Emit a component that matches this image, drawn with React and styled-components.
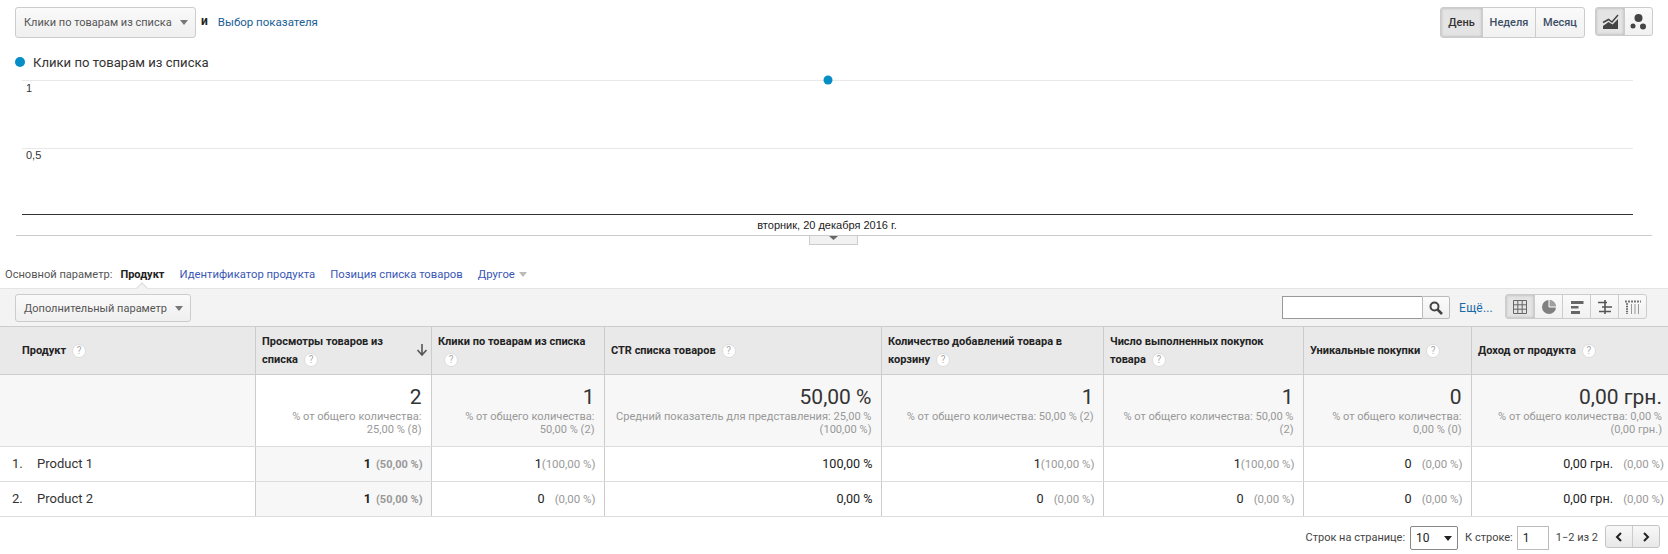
import React from "react";
import styled, { createGlobalStyle } from "styled-components";

const Global = createGlobalStyle`
  html, body { margin: 0; padding: 0; background: #fff; }
  body { font-family: Roboto, "Liberation Sans", Arial, sans-serif; color: #333; overflow: hidden; }
  * { box-sizing: border-box; }
`;

const Page = styled.div`
  width: 1668px;
  height: 554px;
  overflow: hidden;
`;

const TopBar = styled.div`
  display: flex;
  align-items: flex-start;
  padding: 7px 15px 0 15px;
  height: 52px;
`;

const Caret = styled.span`
  display: inline-block;
  flex: none;
  width: 0;
  height: 0;
  border-left: 4.5px solid transparent;
  border-right: 4.5px solid transparent;
  border-top: 5px solid ${(p) => p.$color || "#777"};
`;

const Dropdown = styled.div`
  display: flex;
  align-items: center;
  justify-content: space-between;
  width: ${(p) => p.$width}px;
  height: ${(p) => p.$height}px;
  padding: 0 7px 0 8px;
  border: 1px solid #ccc;
  border-radius: 3px;
  background: linear-gradient(#fafafa, #efefef);
  font-size: 11px;
  color: #555;
  white-space: nowrap;
`;

const AndLabel = styled.span`
  margin-left: 5px;
  line-height: 28px;
  font-size: 12px;
  font-weight: 700;
  color: #222;
`;

const MetricLink = styled.a`
  margin-left: 10px;
  line-height: 30px;
  font-size: 11.5px;
  color: #1a5e96;
`;

const Spacer = styled.div`
  flex: 1;
`;

const Segmented = styled.div`
  display: flex;
  height: ${(p) => p.$height}px;
  margin-left: ${(p) => p.$gap || 0}px;
  border: 1px solid #ccc;
  border-radius: 3px;
  overflow: hidden;
  background: linear-gradient(#fafafa, #f1f1f1);
`;

const SegButton = styled.div`
  display: flex;
  align-items: center;
  justify-content: center;
  width: ${(p) => p.$width}px;
  font-size: 11px;
  font-weight: 500;
  color: ${(p) => (p.$active ? "#333" : "#3d4f66")};
  border-left: ${(p) => (p.$first ? "none" : "1px solid #ccc")};
  background: ${(p) => (p.$active ? "#e4e4e4" : "transparent")};
  box-shadow: ${(p) => (p.$active ? "inset 0 0 3px #aaa" : "none")};
`;

const Legend = styled.div`
  display: flex;
  align-items: center;
  height: 20px;
  padding-left: 15px;
  font-size: 13.1px;
  color: #333;
`;

const LegendDot = styled.span`
  width: 10px;
  height: 10px;
  margin-right: 8px;
  border-radius: 50%;
  background: #058dc7;
`;

const ChartBox = styled.div`
  height: 173px;
`;

const ChartSvg = styled.svg`
  display: block;
  width: 1668px;
  height: 173px;
`;

const ParamRow = styled.div`
  position: relative;
  display: flex;
  align-items: center;
  height: 43px;
  padding: 15px 0 0 5px;
  font-size: 11.1px;
  color: #555;
`;

const ParamLink = styled.a`
  margin-left: ${(p) => p.$gap}px;
  color: ${(p) => (p.$active ? "#222" : "#3a57b5")};
  font-size: ${(p) => (p.$active ? 11 : 11.3)}px;
  font-weight: ${(p) => (p.$active ? 700 : 400)};
  display: inline-flex;
  align-items: center;
  gap: 4px;
`;

const Notch = styled.span`
  position: absolute;
  left: 138px;
  bottom: -4px;
  z-index: 1;
  width: 8px;
  height: 8px;
  transform: rotate(45deg);
  background: #f3f3f3;
  border-left: 1px solid #ddd;
  border-top: 1px solid #ddd;
`;

const Toolbar = styled.div`
  display: flex;
  align-items: flex-start;
  height: 38px;
  padding: 5px 21px 0 15px;
  background: #f3f3f3;
  border-top: 1px solid #e4e4e4;
`;

const SearchWrap = styled.div`
  display: flex;
  height: 23px;
  margin-top: 2px;
`;

const SearchInput = styled.div`
  width: 140px;
  border: 1px solid #999;
  border-right: none;
  background: #fff;
`;

const SearchButton = styled.div`
  display: flex;
  align-items: center;
  justify-content: center;
  width: 28px;
  border: 1px solid #bbb;
  border-radius: 0 2px 2px 0;
  background: linear-gradient(#fbfbfb, #f0f0f0);
`;

const MoreLink = styled.a`
  margin: 2px 12px 0 9px;
  line-height: 24px;
  font-size: 12px;
  color: #1a6aa5;
  letter-spacing: 0.2px;
`;

const Grid = styled.table`
  table-layout: fixed;
  width: 1668px;
  border-collapse: collapse;
  border-top: 1px solid #ccc;
`;

const Head = styled.th`
  height: 48px;
  padding: 0 ${(p) => (p.$sorted ? 24 : 6)}px 0 ${(p) => p.$pad || 6.5}px;
  background: #e9e9e9;
  border-right: 1px solid #ccc;
  border-bottom: 1px solid #ccc;
  font-size: 11px;
  font-weight: 700;
  line-height: 18px;
  text-align: left;
  color: #222;
  position: relative;
  &:last-child { border-right: none; }
`;

const Help = styled.span`
  display: inline-flex;
  align-items: center;
  justify-content: center;
  width: 14px;
  height: 14px;
  margin-left: 6px;
  border-radius: 50%;
  background: #fff;
  border: 1px solid #ddd;
  font-size: 10px;
  font-weight: 400;
  color: #aaa;
`;

const SortArrow = styled.svg`
  position: absolute;
  right: 3px;
  top: 17px;
`;

const Total = styled.td`
  height: 72px;
  padding: 9px 9px 0 11px;
  vertical-align: top;
  text-align: right;
  background: ${(p) => (p.$sorted ? "#fff" : "#f7f7f7")};
  border-right: 1px solid #ccc;
  border-bottom: 1px solid #ddd;
  &:last-child { border-right: none; padding-right: 6px; }
`;

const TotalValue = styled.div`
  font-size: 21px;
  line-height: 26px;
  color: #333;
`;

const TotalNote = styled.div`
  font-size: 11.1px;
  line-height: 13px;
  color: #999;
`;

const Cell = styled.td`
  height: 35px;
  padding: 0 8px 1px 6px;
  text-align: right;
  font-size: 12.6px;
  color: #222;
  white-space: nowrap;
  font-weight: ${(p) => (p.$sorted ? 700 : 400)};
  background: ${(p) => (p.$sorted ? "#f7f7f7" : "#fff")};
  border-right: 1px solid #ccc;
  border-bottom: 1px solid #ddd;
  &:last-child { border-right: none; padding-right: 4px; }
`;

const Pct = styled.span`
  display: inline-block;
  min-width: ${(p) => (p.$sorted ? 46 : 51)}px;
  text-align: right;
  font-size: ${(p) => (p.$sorted ? 11 : 11.5)}px;
  color: #999;
  margin-left: ${(p) => (p.$sorted ? 5 : 0)}px;
  font-weight: ${(p) => (p.$sorted ? 700 : 400)};
`;

const DimCell = styled.td`
  height: 35px;
  padding: 0 0 1px 12px;
  font-size: 13px;
  color: #333;
  border-right: 1px solid #ccc;
  border-bottom: 1px solid #ddd;
`;

const Rank = styled.span`
  display: inline-block;
  width: 25px;
`;

const Footer = styled.div`
  display: flex;
  align-items: flex-start;
  justify-content: flex-end;
  padding: 8px 8px 0 0;
  font-size: 11px;
  color: #444;
`;

const FootLabel = styled.span`
  line-height: 26px;
  margin-left: ${(p) => p.$gap || 0}px;
`;

const PageSelect = styled.div`
  display: flex;
  align-items: center;
  justify-content: space-between;
  width: 48px;
  height: 24px;
  margin: 1px 0 0 5px;
  padding: 0 5px;
  border: 1px solid #888;
  border-radius: 2px;
  font-size: 12px;
  color: #222;
`;

const PageInput = styled.div`
  width: 32px;
  height: 24px;
  margin: 1px 0 0 4px;
  padding-left: 5px;
  font-size: 12px;
  line-height: 23px;
  border: 1px solid #bbb;
  color: #222;
`;

const Pager = styled.div`
  display: flex;
  width: 55px;
  height: 23px;
  margin-left: 7px;
  border: 1px solid #c4c4c4;
  border-radius: 3px;
  background: linear-gradient(#f8f8f8, #e8e8e8);
`;

const PagerBtn = styled.div`
  flex: 1;
  display: flex;
  align-items: center;
  justify-content: center;
  border-left: ${(p) => (p.$first ? "none" : "1px solid #ccc")};
`;

const LineIcon = () => (
  <svg width="17" height="15" viewBox="0 0 17 15">
    <path d="M1 8.500 L6.500 5.500 L10 8 L16 1" fill="none" stroke="#444" strokeWidth="1.500" />
    <path d="M1 12 L6.500 8 L10.500 10.500 L16 5 V15 H1 Z" fill="#444" />
  </svg>
);

const DotsIcon = () => (
  <svg width="18" height="18" viewBox="0 0 18 18">
    <circle cx="8.500" cy="5" r="4" fill="#444" />
    <circle cx="3" cy="13" r="2.500" fill="#444" />
    <circle cx="13" cy="13.500" r="3" fill="#444" />
  </svg>
);

const TableIcon = () => (
  <svg width="14" height="14" viewBox="0 0 14 14">
    <path d="M.5.5h13v13H.5zM.5 4.800h13M.5 9.200h13M4.800.5v13M9.200.5v13" fill="none" stroke="#666" />
  </svg>
);

const PieIcon = () => (
  <svg width="14" height="14" viewBox="0 0 14 14">
    <circle cx="7" cy="7" r="7" fill="#808080" />
    <path d="M7 7V0A7 7 0 0 1 14 7Z" fill="#a0a0a0" />
    <path d="M7 7V0M7 7h7" stroke="#fff" strokeWidth="1" />
  </svg>
);

const BarsIcon = () => (
  <svg width="14" height="14" viewBox="0 0 14 14">
    <path d="M1 1h12.500v3H1zM1 6h7.500v2.500H1zM1 11h9v3H1z" fill="#666" />
  </svg>
);

const CompareIcon = () => (
  <svg width="14" height="14" viewBox="0 0 14 14">
    <path d="M0 2.500h9M4 7h10M1 11.500h12" stroke="#555" strokeWidth="1.600" />
    <path d="M7 0v14" stroke="#555" strokeWidth="1.600" />
  </svg>
);

const PivotIcon = () => (
  <svg width="16" height="14" viewBox="0 0 16 14">
    <path d="M0 1.500h16" stroke="#777" strokeWidth="2" strokeDasharray="2 1" />
    <path d="M1 4h2M1 6.500h2M1 9h2M1 11.500h2M1 14h2" stroke="#666" strokeWidth="1.400" />
    <path d="M6.500 4v10M10 4v10M13.500 4v10" stroke="#999" />
  </svg>
);

const SearchIcon = () => (
  <svg width="14" height="14" viewBox="0 0 14 14">
    <circle cx="5.500" cy="5.500" r="4" fill="none" stroke="#444" strokeWidth="2" />
    <path d="M8.500 8.500L13 13" stroke="#444" strokeWidth="2.600" />
  </svg>
);

const Chevron = ({ left }) => (
  <svg width="8" height="10" viewBox="0 0 8 10">
    <path d={left ? "M6 1L2 5l4 4" : "M2 1l4 4-4 4"} fill="none" stroke="#222" strokeWidth="2" />
  </svg>
);

const columns = [255, 176, 173, 277, 222, 200, 168, 197];

const heads = [
  "Просмотры товаров из списка",
  "Клики по товарам из списка",
  "CTR списка товаров",
  "Количество добавлений товара в корзину",
  "Число выполненных покупок товара",
  "Уникальные покупки",
  "Доход от продукта",
];

const totals = [
  ["2", "% от общего количества: 25,00 % (8)"],
  ["1", "% от общего количества: 50,00 % (2)"],
  ["50,00 %", "Средний показатель для представления: 25,00 % (100,00 %)"],
  ["1", "% от общего количества: 50,00 % (2)"],
  ["1", "% от общего количества: 50,00 % (2)"],
  ["0", "% от общего количества: 0,00 % (0)"],
  ["0,00 грн.", "% от общего количества: 0,00 % (0,00 грн.)"],
];

const rows = [
  {
    name: "Product 1",
    cells: [["1", "(50,00 %)"], ["1", "(100,00 %)"], ["100,00 %"], ["1", "(100,00 %)"], ["1", "(100,00 %)"], ["0", "(0,00 %)"], ["0,00 грн.", "(0,00 %)"]],
  },
  {
    name: "Product 2",
    cells: [["1", "(50,00 %)"], ["0", "(0,00 %)"], ["0,00 %"], ["0", "(0,00 %)"], ["0", "(0,00 %)"], ["0", "(0,00 %)"], ["0,00 грн.", "(0,00 %)"]],
  },
];

export default function App() {
  return (
    <Page>
      <Global />
      <TopBar>
        <Dropdown $width={181} $height={31}>
          Клики по товарам из списка <Caret />
        </Dropdown>
        <AndLabel>и</AndLabel>
        <MetricLink>Выбор показателя</MetricLink>
        <Spacer />
        <Segmented $height={31}>
          <SegButton $first $active $width={41}>День</SegButton>
          <SegButton $width={53}>Неделя</SegButton>
          <SegButton $width={49}>Месяц</SegButton>
        </Segmented>
        <Segmented $height={29} $gap={10}>
          <SegButton $first $active $width={28}><LineIcon /></SegButton>
          <SegButton $width={28}><DotsIcon /></SegButton>
        </Segmented>
      </TopBar>
      <Legend>
        <LegendDot />
        Клики по товарам из списка
      </Legend>
      <ChartBox>
        <ChartSvg viewBox="0 0 1668 173">
          <path d="M22 8.500H1633M22 76.500H1633" stroke="#e8e8e8" />
          <path d="M22 142.500H1633" stroke="#333" />
          <path d="M16 163.500H1652" stroke="#ccc" />
          <circle cx="828" cy="8" r="4.500" fill="#058dc7" />
          <text x="26" y="20" fontSize="11" fill="#333" fontFamily="Liberation Sans">1</text>
          <text x="26" y="87" fontSize="11" fill="#333" fontFamily="Liberation Sans">0,5</text>
          <text x="827" y="157" fontSize="11" fill="#222" textAnchor="middle" fontFamily="Liberation Sans">вторник, 20 декабря 2016 г.</text>
          <rect x="809.500" y="163.500" width="48" height="9" fill="#f1f1f1" stroke="#ccc" />
          <path d="M829 164h9l-4.500 4z" fill="#666" />
        </ChartSvg>
      </ChartBox>
      <ParamRow>
        Основной параметр:
        <ParamLink $active $gap={8}>Продукт</ParamLink>
        <ParamLink $gap={15}>Идентификатор продукта</ParamLink>
        <ParamLink $gap={15}>Позиция списка товаров</ParamLink>
        <ParamLink $gap={15}>Другое <Caret $color="#bbb" /></ParamLink>
        <Notch />
      </ParamRow>
      <Toolbar>
        <Dropdown $width={176} $height={28}>
          Дополнительный параметр <Caret />
        </Dropdown>
        <Spacer />
        <SearchWrap>
          <SearchInput />
          <SearchButton><SearchIcon /></SearchButton>
        </SearchWrap>
        <MoreLink>Ещё...</MoreLink>
        <Segmented $height={25}>
          <SegButton $first $active $width={28}><TableIcon /></SegButton>
          <SegButton $width={28}><PieIcon /></SegButton>
          <SegButton $width={28}><BarsIcon /></SegButton>
          <SegButton $width={28}><CompareIcon /></SegButton>
          <SegButton $width={28}><PivotIcon /></SegButton>
        </Segmented>
      </Toolbar>
      <Grid>
        <colgroup>
          {columns.map((w, i) => (
            <col key={i} style={{ width: w }} />
          ))}
        </colgroup>
        <thead>
          <tr>
            <Head $pad={22}>Продукт<Help>?</Help></Head>
            {heads.map((h, i) => (
              <Head key={h} $sorted={i === 0}>
                {h}
                <Help>?</Help>
                {i === 0 && (
                  <SortArrow width="12" height="12" viewBox="0 0 12 12">
                    <path d="M6 0v10M1.500 6L6 11l4.500-5" fill="none" stroke="#555" strokeWidth="1.600" />
                  </SortArrow>
                )}
              </Head>
            ))}
          </tr>
        </thead>
        <tbody>
          <tr>
            <Total />
            {totals.map(([v, n], i) => (
              <Total key={i} $sorted={i === 0}>
                <TotalValue>{v}</TotalValue>
                <TotalNote>{n}</TotalNote>
              </Total>
            ))}
          </tr>
          {rows.map((r, ri) => (
            <tr key={r.name}>
              <DimCell><Rank>{ri + 1}.</Rank>{r.name}</DimCell>
              {r.cells.map(([v, p], i) => (
                <Cell key={i} $sorted={i === 0}>
                  {v}
                  {p && <Pct $sorted={i === 0}>{p}</Pct>}
                </Cell>
              ))}
            </tr>
          ))}
        </tbody>
      </Grid>
      <Footer>
        <FootLabel>Строк на странице:</FootLabel>
        <PageSelect>10 <Caret $color="#222" /></PageSelect>
        <FootLabel $gap={7}>К строке:</FootLabel>
        <PageInput>1</PageInput>
        <FootLabel $gap={7}>1−2 из 2</FootLabel>
        <Pager>
          <PagerBtn $first><Chevron left /></PagerBtn>
          <PagerBtn><Chevron /></PagerBtn>
        </Pager>
      </Footer>
    </Page>
  );
}
